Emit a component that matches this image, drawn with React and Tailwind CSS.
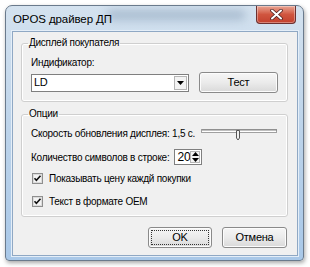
import React from "react";

const font = { fontFamily: '"Liberation Sans", Arial, sans-serif' };

function Check() {
  return (
    <svg width="11" height="11" viewBox="0 0 11 11" className="shrink-0">
      <rect x="0.5" y="0.5" width="10" height="10" fill="#ffffff" stroke="#8f8f8f" />
      <rect x="1.5" y="1.5" width="8" height="8" fill="#f4f4f4" stroke="#dcdcdc" />
      <path d="M2.5 5.2 L4.4 7.3 L8.5 2.8" fill="none" stroke="#111" strokeWidth="1.6" />
    </svg>
  );
}

function Button({ children, focused, w }) {
  return (
    <div
      className={`${w} h-[21px] rounded-[3px] border border-[#8a8a8a] bg-gradient-to-b from-[#f6f6f6] via-[#ebebeb] to-[#d9d9d9] flex items-center justify-center p-[2px] shadow-[inset_0_0_0_1px_#fcfcfc]`}
    >
      <div
        className={`w-full h-full flex items-center justify-center text-[11px] leading-none text-black ${
          focused ? "border border-dotted border-[#333]" : ""
        }`}
      >
        {children}
      </div>
    </div>
  );
}

export default function App() {
  return (
    <div className="w-[310px] h-[267px] bg-white pt-[5px] pl-[5px]" style={font}>
      <div className="relative w-[299px] h-[256px] rounded-t-[7px] rounded-b-[4px] border border-[#6a7a8c] bg-gradient-to-b from-[#d4e2ef] via-[#bcd3ea] to-[#a9c8e8] shadow-[1px_2px_4px_rgba(0,0,0,0.35)] flex flex-col overflow-hidden">
        {/* title bar */}
        <div className="relative h-[25px] flex items-start justify-between">
          <div className="absolute left-[100px] top-[4px] w-[140px] h-[10px] rounded-full bg-[#7e96b0] opacity-50 blur-[5px]" />
          <div className="relative pl-[7px] pt-[6px] text-[11.5px] leading-[14px] text-black tracking-[-0.1px]">OPOS драйвер ДП</div>
          <div className="relative mr-[7px] w-[40px] h-[18px] rounded-b-[4px] border border-t-0 border-[#6b3030] bg-gradient-to-b from-[#e8a493] via-[#d0553f] to-[#c2402e] flex items-center justify-center shadow-[inset_0_0_0_1px_rgba(255,255,255,0.35)]">
            <svg width="13" height="11" viewBox="0 0 13 11">
              <path d="M2 1.5 L11 9.5 M11 1.5 L2 9.5" stroke="#4a2020" strokeWidth="3.6" strokeLinecap="round" />
              <path d="M2 1.5 L11 9.5 M11 1.5 L2 9.5" stroke="#ffffff" strokeWidth="2" strokeLinecap="round" />
            </svg>
          </div>
        </div>
        {/* client */}
        <div className="flex-1 ml-[6px] mr-[5px] mb-[4px] border border-[#8fa8c4] shadow-[0_0_0_1px_#e4eef8] bg-[#f0f0f0] flex flex-col text-[10px] tracking-[-0.25px] text-black">
          {/* group 1 */}
          <fieldset className="mt-[5px] ml-[8px] mr-[9px] h-[65px] border border-[#cfcfcf] rounded-[3px] shadow-[inset_0_0_0_1px_#ffffff] px-[9px]">
            <legend className="ml-[-3px] px-[1px] leading-[12px]">Дисплей покупателя</legend>
            <div className="mt-[7px] leading-[13px]">Индификатор:</div>
            <div className="mt-[3px] flex items-center gap-[10px]">
              <div className="w-[158px] h-[18px] bg-white border border-[#7f7f7f] flex items-center pl-[2px] pr-[1px] justify-between">
                <span className="leading-none text-[11px]">LD</span>
                <div className="w-[13px] h-[14px] border border-[#b5b5b5] bg-[#f3f3f3] flex items-center justify-center">
                  <svg width="7" height="4" viewBox="0 0 7 4">
                    <path d="M0 0 H7 L3.5 4 Z" fill="#000" />
                  </svg>
                </div>
              </div>
              <Button w="w-[79px]">Тест</Button>
            </div>
          </fieldset>
          {/* group 2 */}
          <fieldset className="mt-[6px] ml-[8px] mr-[9px] h-[109px] border border-[#cfcfcf] rounded-[3px] shadow-[inset_0_0_0_1px_#ffffff] px-[9px]">
            <legend className="ml-[-3px] px-[1px] leading-[12px]">Опции</legend>
            <div className="mt-[5px] h-[16px] flex items-center whitespace-nowrap">
              <span className="leading-[13px]">Скорость обновления дисплея: 1,5 с.</span>
              <svg width="77" height="14" viewBox="0 0 77 14" className="ml-[6px] mt-[2px] shrink-0">
                <rect x="0.5" y="2.5" width="75" height="3" fill="#ffffff" stroke="#a0a0a0" />
                <line x1="1" y1="3" x2="76" y2="3" stroke="#808080" />
                <path d="M35.5 3.5 V11 L37 13 L38.5 11 V3.5 Z" fill="#f0f0f0" stroke="#555" />
              </svg>
            </div>
            <div className="mt-[8px] h-[16px] flex items-center whitespace-nowrap">
              <span className="leading-[13px]">Количество символов в строке:</span>
              <div className="ml-[5px] w-[28px] h-[16px] bg-white border border-[#7f7f7f] flex items-center justify-between pl-[2px] pr-[1px]">
                <span className="leading-none text-[12px]">20</span>
                <div className="w-[10px] h-[12px] border border-[#b5b5b5] bg-[#f3f3f3] flex flex-col items-center justify-center gap-[2px]">
                  <svg width="7" height="4" viewBox="0 0 7 4">
                    <path d="M0 4 H7 L3.5 0 Z" fill="#000" />
                  </svg>
                  <svg width="7" height="4" viewBox="0 0 7 4">
                    <path d="M0 0 H7 L3.5 4 Z" fill="#000" />
                  </svg>
                </div>
              </div>
            </div>
            <div className="mt-[7px] ml-[1px] flex items-center gap-[6px] whitespace-nowrap">
              <Check />
              <span className="leading-[13px]">Показывать цену каждй покупки</span>
            </div>
            <div className="mt-[10px] ml-[1px] flex items-center gap-[6px] whitespace-nowrap">
              <Check />
              <span className="leading-[13px]">Текст в формате OEM</span>
            </div>
          </fieldset>
          {/* buttons */}
          <div className="mt-[10px] mr-[10px] flex justify-end gap-[10px]">
            <Button w="w-[64px]" focused>
              OK
            </Button>
            <Button w="w-[65px]">Отмена</Button>
          </div>
        </div>
      </div>
    </div>
  );
}
